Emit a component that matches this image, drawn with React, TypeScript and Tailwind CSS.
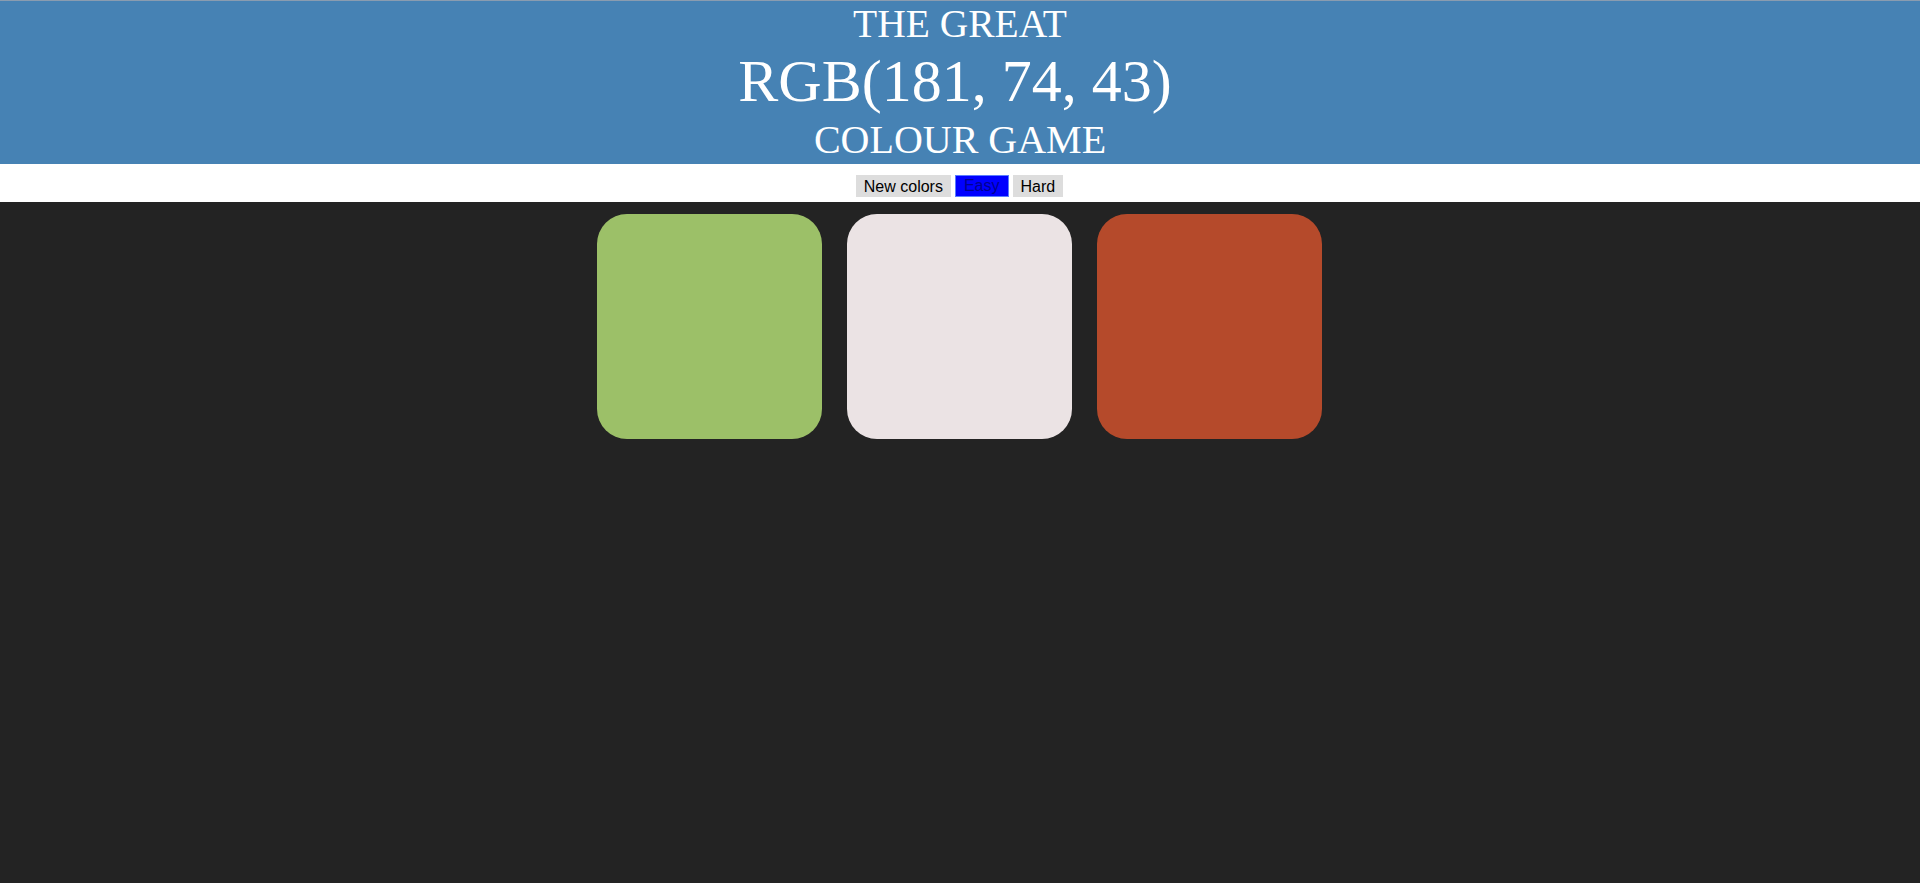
const SQUARES = ['#9cc068', '#ebe3e4', '#b54a2b'];

export default function App() {
  return (
    <div className="min-h-[883px] bg-[#232323] font-['Liberation_Serif',serif]">
      <header className="h-[164px] border-t border-[#8a9cb0] bg-[#4682b4] pt-[1px] text-center font-normal text-white">
        <div className="h-[44px] text-[39.5px] leading-[44px]">THE GREAT</div>
        <div className="h-[71px] pr-[10px] text-[60px] leading-[70px]">RGB(181, 74, 43)</div>
        <div className="h-[47px] text-[40px] leading-[46px]">COLOUR GAME</div>
      </header>

      <div className="flex h-[38px] justify-center gap-[4px] bg-white pt-[11px] pr-[1px] font-['Liberation_Sans',Arial,sans-serif] text-[16px] leading-[21px]">
        <button className="h-[22px] bg-[#dddddd] px-[8px] text-[16px] text-black">New colors</button>
        <button className="h-[22px] border border-[#5a7dff] bg-[#0000ff] px-[8px] text-[16px] leading-[20px] text-[#000090]">Easy</button>
        <button className="h-[22px] bg-[#dddddd] px-[8px] text-[16px] text-black">Hard</button>
      </div>

      <div className="mt-[12px] flex justify-center gap-[25px] pr-[1px]">
        {SQUARES.map((c) => (
          <div key={c} className="h-[225px] w-[225px] rounded-[30px]" style={{ backgroundColor: c }} />
        ))}
      </div>
    </div>
  );
}
